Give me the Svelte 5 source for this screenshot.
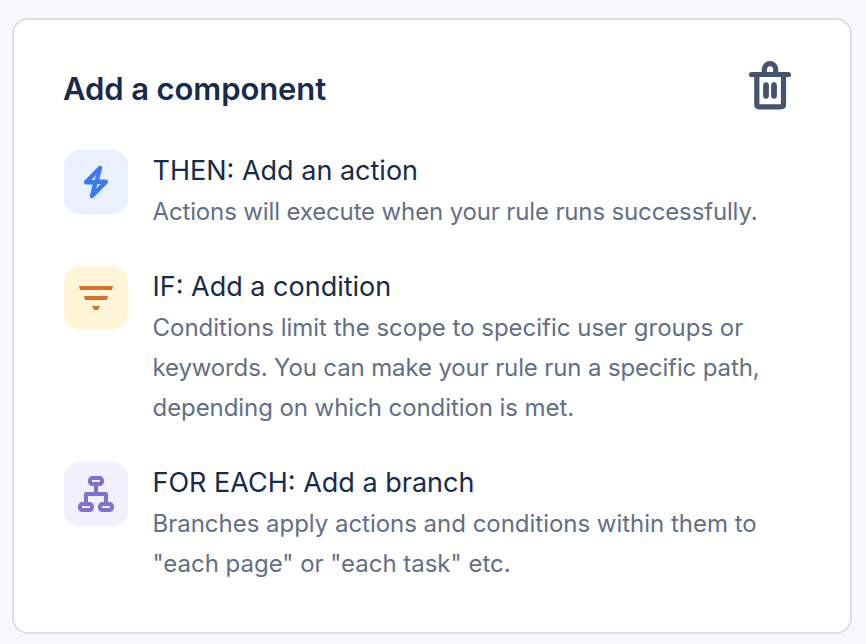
<script>
  const items = [
    { kind: 'action', title: 'THEN: Add an action', lines: [['Actions will execute when your rule runs successfully.', -0.14]] },
    { kind: 'condition', title: 'IF: Add a condition', lines: [['Conditions limit the scope to specific user groups or', -0.01], ['keywords. You can make your rule run a specific path,', -0.13], ['depending on which condition is met.', -0.07]] },
    { kind: 'branch', title: 'FOR EACH: Add a branch', lines: [['Branches apply actions and conditions within them to', -0.02], ['"each page" or "each task" etc.', -0.02]] }
  ];
</script>

<main>
  <section class="card">
    <header>
      <h1>Add a component</h1>
      <button aria-label="Delete">
        <svg width="44" height="50" viewBox="0 0 44 50" fill="none" stroke="#44546f" stroke-width="5.2">
          <path d="M3.6 14.5H40.4" stroke-linecap="round" />
          <path d="M16.3 13V9.4A5.7 5.7 0 0 1 27.7 9.4V13" />
          <path d="M8.8 15V44.2Q8.8 46.8 11.4 46.8H32.9Q35.5 46.8 35.5 44.2V15" />
          <path d="M18 25.2V35.8M26 25.2V35.8" stroke-linecap="round" stroke-width="5.8" />
        </svg>
      </button>
    </header>
    <ul>
      {#each items as item}
        <li>
          <div class="icon {item.kind}">
            <svg width="64" height="64" viewBox="0 0 64 64" fill="none" stroke="currentColor" stroke-width="4" stroke-linejoin="round">
              {#if item.kind === 'action'}
                <path d="M36 18L22 32.3H31.5L28 46L42 31.7H32.5Z" stroke-width="4.4" />
              {:else if item.kind === 'condition'}
                <path d="M15 20H49L48 24H16ZM20 30H44L43 34H21ZM28 40H36L34 44H30Z" fill="currentColor" stroke="none" />
              {:else}
                <rect x="26" y="16" width="12" height="6" rx="2.5" />
                <rect x="16" y="42" width="12" height="6" rx="2.5" />
                <rect x="36" y="42" width="12" height="6" rx="2.5" />
                <path d="M32 22V32M22 42V32H42V42" />
              {/if}
            </svg>
          </div>
          <div class="copy">
            <h2>{item.title}</h2>
            <p>
              {#each item.lines as [line, tracking]}
                <span style="letter-spacing: {tracking}px">{line}</span>
              {/each}
            </p>
          </div>
        </li>
      {/each}
    </ul>
  </section>
</main>

<style>
  :global(body) { background: #f7f8f9; }
  main { box-sizing: border-box; height: 644px; padding: 18px 14px 10px 12px; font-family: Inter, "Liberation Sans", sans-serif; }
  .card { box-sizing: border-box; height: 616px; padding: 40px 50px; background: #fff; border: 2px solid #dcdfe4; border-radius: 16px; }
  header { display: flex; justify-content: space-between; padding-right: 8px; height: 90px; }
  h1, h2, p, ul { margin: 0; padding: 0; }
  h1 { padding-top: 9px; margin-left: -1px; font-size: 31px; line-height: 40px; font-weight: 600; letter-spacing: -0.1px; color: #172b4d; }
  button { border: 0; padding: 0; background: none; height: 50px; }
  button svg, .icon svg { display: block; }
  ul { list-style: none; }
  li { display: flex; gap: 24.5px; margin-bottom: 34px; }
  .icon { width: 64px; height: 64px; border-radius: 16px; flex: none; }
  .action { background: #e9f0ff; color: #3b7af5; }
  .condition { background: #fff6d8; color: #d5712c; }
  .branch { background: #f2efff; color: #8070d4; }
  h2, span { display: block; line-height: 40px; white-space: nowrap; }
  h2 { padding-top: 1px; padding-bottom: 1px; font-size: 27px; font-weight: 400; color: #172b4d; }
  p { font-size: 24px; color: #626f86; }
</style>
